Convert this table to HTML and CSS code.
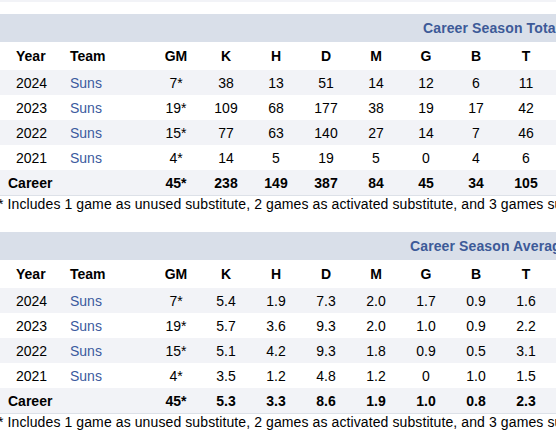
FILE: index.html
```html
<!DOCTYPE html>
<html>
<head>
<meta charset="utf-8">
<link rel="stylesheet" href="styles.css">
</head>
<body>
<div class="strip"></div>
<section class="block">
  <table class="stats">
    <colgroup>
      <col class="c-year"><col class="c-team"><col class="c-num"><col class="c-num"><col class="c-num"><col class="c-num"><col class="c-num"><col class="c-num"><col class="c-num"><col class="c-num"><col class="c-rest">
    </colgroup>
    <thead>
      <tr class="band"><th colspan="11" class="caption">Career Season Totals</th></tr>
      <tr class="head">
        <th class="year">Year</th><th class="team">Team</th><th>GM</th><th>K</th><th>H</th><th>D</th><th>M</th><th>G</th><th>B</th><th>T</th><th></th>
      </tr>
    </thead>
    <tbody>
      <tr class="alt"><td class="year">2024</td><td class="team"><a href="#">Suns</a></td><td>7*</td><td>38</td><td>13</td><td>51</td><td>14</td><td>12</td><td>6</td><td>11</td><td></td></tr>
      <tr><td class="year">2023</td><td class="team"><a href="#">Suns</a></td><td>19*</td><td>109</td><td>68</td><td>177</td><td>38</td><td>19</td><td>17</td><td>42</td><td></td></tr>
      <tr class="alt"><td class="year">2022</td><td class="team"><a href="#">Suns</a></td><td>15*</td><td>77</td><td>63</td><td>140</td><td>27</td><td>14</td><td>7</td><td>46</td><td></td></tr>
      <tr><td class="year">2021</td><td class="team"><a href="#">Suns</a></td><td>4*</td><td>14</td><td>5</td><td>19</td><td>5</td><td>0</td><td>4</td><td>6</td><td></td></tr>
      <tr class="alt total"><td colspan="2" class="career">Career</td><td>45*</td><td>238</td><td>149</td><td>387</td><td>84</td><td>45</td><td>34</td><td>105</td><td></td></tr>
    </tbody>
  </table>
  <p class="note">* Includes 1 game as unused substitute, 2 games as activated substitute, and 3 games substitute not used</p>
</section>
<section class="block">
  <table class="stats">
    <colgroup>
      <col class="c-year"><col class="c-team"><col class="c-num"><col class="c-num"><col class="c-num"><col class="c-num"><col class="c-num"><col class="c-num"><col class="c-num"><col class="c-num"><col class="c-rest">
    </colgroup>
    <thead>
      <tr class="band"><th colspan="11" class="caption avg">Career Season Averages</th></tr>
      <tr class="head">
        <th class="year">Year</th><th class="team">Team</th><th>GM</th><th>K</th><th>H</th><th>D</th><th>M</th><th>G</th><th>B</th><th>T</th><th></th>
      </tr>
    </thead>
    <tbody>
      <tr class="alt"><td class="year">2024</td><td class="team"><a href="#">Suns</a></td><td>7*</td><td>5.4</td><td>1.9</td><td>7.3</td><td>2.0</td><td>1.7</td><td>0.9</td><td>1.6</td><td></td></tr>
      <tr><td class="year">2023</td><td class="team"><a href="#">Suns</a></td><td>19*</td><td>5.7</td><td>3.6</td><td>9.3</td><td>2.0</td><td>1.0</td><td>0.9</td><td>2.2</td><td></td></tr>
      <tr class="alt"><td class="year">2022</td><td class="team"><a href="#">Suns</a></td><td>15*</td><td>5.1</td><td>4.2</td><td>9.3</td><td>1.8</td><td>0.9</td><td>0.5</td><td>3.1</td><td></td></tr>
      <tr><td class="year">2021</td><td class="team"><a href="#">Suns</a></td><td>4*</td><td>3.5</td><td>1.2</td><td>4.8</td><td>1.2</td><td>0</td><td>1.0</td><td>1.5</td><td></td></tr>
      <tr class="alt total"><td colspan="2" class="career">Career</td><td>45*</td><td>5.3</td><td>3.3</td><td>8.6</td><td>1.9</td><td>1.0</td><td>0.8</td><td>2.3</td><td></td></tr>
    </tbody>
  </table>
  <p class="note">* Includes 1 game as unused substitute, 2 games as activated substitute, and 3 games substitute not used</p>
</section>
</body>
</html>
```

FILE: styles.css
```css
html, body {
  margin: 0;
  padding: 0;
  overflow: hidden;
  background: #ffffff;
}
body {
  font-family: "Liberation Sans", Arial, sans-serif;
  font-size: 14px;
  color: #000;
  width: 556px;
}
.strip {
  height: 2px;
  background: #f2f3f7;
  margin-bottom: 12px;
}
.block {
  margin-bottom: 20px;
}
.stats {
  border-collapse: collapse;
  table-layout: fixed;
  width: 600px;
}
.c-year { width: 62px; }
.c-team { width: 89px; }
.c-num { width: 50px; }
.c-rest { width: 49px; }
.stats th, .stats td {
  padding: 0;
  text-align: center;
  vertical-align: middle;
  line-height: 16px;
  white-space: nowrap;
}
.band th {
  height: 28px;
  background: #d9dfe9;
}
.caption {
  text-align: left !important;
  padding-left: 423px !important;
  color: #3d5a98;
  font-weight: bold;
  letter-spacing: 0.12px;
  overflow: hidden;
}
.caption.avg {
  padding-left: 410px !important;
}
.head th {
  height: 28px;
  font-weight: bold;
  background: #fff;
}
.stats td {
  height: 25px;
}
.stats .year {
  text-align: left;
  padding-left: 16px;
}
.stats .team {
  text-align: left;
  padding-left: 8px;
}
.stats a {
  color: #3b5a9e;
  text-decoration: none;
}
.alt td {
  background: #f2f3f7;
}
.total td {
  font-weight: bold;
  border-bottom: 1px solid #dde1e8;
}
.stats .career {
  text-align: left;
  padding-left: 8px;
}
.note {
  margin: 0 0 0 -2px;
  line-height: 16px;
  letter-spacing: 0.1px;
  white-space: nowrap;
}
```
